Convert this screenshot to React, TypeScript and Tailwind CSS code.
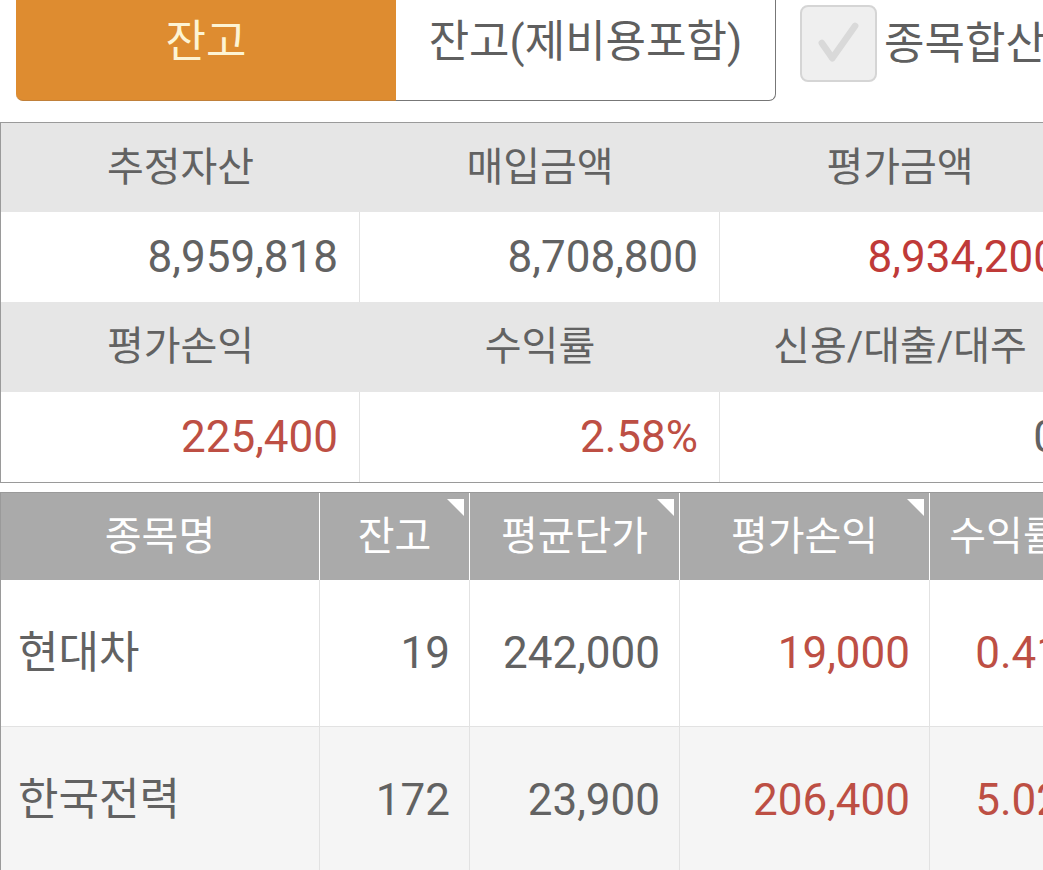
import { Fragment } from 'react';

// 잔고 화면 - 요약 + 종목 리스트
const FONT = { fontFamily: "Roboto, 'Noto Sans CJK KR', sans-serif" };

type Summary = { label: string; value: string; tone?: 'red' | 'dark' };

const summaryRows: Summary[][] = [
  [
    { label: '추정자산', value: '8,959,818' },
    { label: '매입금액', value: '8,708,800' },
    { label: '평가금액', value: '8,934,200', tone: 'dark' },
  ],
  [
    { label: '평가손익', value: '225,400', tone: 'red' },
    { label: '수익률', value: '2.58%', tone: 'red' },
    { label: '신용/대출/대주', value: '0' },
  ],
];

const columns = [
  { label: '종목명', width: 'w-[319px]', sort: false },
  { label: '잔고', width: 'w-[150px]', sort: true },
  { label: '평균단가', width: 'w-[210px]', sort: true },
  { label: '평가손익', width: 'w-[250px]', sort: true },
  { label: '수익률', width: 'w-[150px]', sort: false },
];

const stocks = [
  { name: '현대차', qty: '19', avg: '242,000', pl: '19,000', rate: '0.41', bg: 'bg-white' },
  { name: '한국전력', qty: '172', avg: '23,900', pl: '206,400', rate: '5.02', bg: 'bg-[#f5f5f5]' },
];

const toneClass = (tone?: string) => {
  if (tone === 'red') return 'text-[#bd4f44]';
  if (tone === 'dark') return 'text-[#bf3a38]';
  return 'text-[#626262]';
};

const Tabs = () => (
  <div className="flex items-start h-[101px]">
    <div className="ml-4 flex h-[101px]">
      <div className="w-[380px] flex items-center justify-center pb-[17px] bg-[#de8c30] border-b border-[#c0803a] rounded-bl-[7px] text-[44px] leading-none text-[#fdf4d4]">
        잔고
      </div>
      <div className="w-[380px] flex items-center justify-center pb-[17px] bg-white border-r border-b border-[#777] rounded-br-[7px] text-[44px] leading-none text-[#5f5f5f] whitespace-nowrap">
        잔고(제비용포함)
      </div>
    </div>
    <div className="ml-6 mt-[5px] flex items-center gap-[7px]">
      <div className="w-[77px] h-[77px] shrink-0 rounded-lg bg-[#efefef] border-2 border-[#d5d5d5] flex items-center justify-center">
        <svg width="77" height="77" viewBox="0 0 77 77">
          <path d="M21 38 L32 54 L56 20" fill="none" stroke="#d9d9d9" strokeWidth="7" strokeLinecap="round" strokeLinejoin="round" />
        </svg>
      </div>
      <span className="text-[44px] leading-none text-[#5f5f5f] whitespace-nowrap">종목합산</span>
    </div>
  </div>
);

const SummaryTable = () => (
  <div className="mt-[21px] w-[1080px] border-l border-t border-b border-[#9a9a9a] grid grid-cols-[359px_360px_360px]">
    {summaryRows.map((row, i) => (
      <Fragment key={i}>
        {row.map((c) => (
          <div
            key={c.label}
            className={`${i === 0 ? 'h-[89px]' : 'h-[90px]'} bg-[#e6e6e6] flex items-center justify-center text-[40px] leading-none text-[#626262] whitespace-nowrap`}
          >
            {c.label}
          </div>
        ))}
        {row.map((c) => (
          <div
            key={c.label + '-v'}
            className={`h-[90px] bg-white border-r border-[#e2e2e2] flex items-center justify-end pr-[21px] text-[44px] leading-none ${toneClass(c.tone)}`}
          >
            {c.value}
          </div>
        ))}
      </Fragment>
    ))}
  </div>
);

const SortMark = () => (
  <span className="absolute top-[6px] right-[5px] w-0 h-0 border-l-[17px] border-l-transparent border-t-[17px] border-t-white" />
);

const StockTable = () => (
  <div className="mt-[9px] w-[1080px] border-l border-t border-[#9a9a9a]">
    <div className="flex h-[87px] bg-[#aaaaaa]">
      {columns.map((col) => (
        <div
          key={col.label}
          className={`${col.width} relative shrink-0 border-r border-white flex items-center justify-center text-[40px] leading-none text-white whitespace-nowrap`}
        >
          {col.label}
          {col.sort && <SortMark />}
        </div>
      ))}
    </div>
    {stocks.map((s) => (
      <div key={s.name} className={`flex h-[147px] ${s.bg} border-b border-[#e2e2e2]`}>
        <div className="w-[319px] shrink-0 border-r border-[#e2e2e2] flex items-center pl-[17px] text-[44px] leading-none text-[#626262]">
          {s.name}
        </div>
        <div className="w-[150px] shrink-0 border-r border-[#e2e2e2] flex items-center justify-end pr-[19px] text-[44px] leading-none text-[#626262]">
          {s.qty}
        </div>
        <div className="w-[210px] shrink-0 border-r border-[#e2e2e2] flex items-center justify-end pr-[19px] text-[44px] leading-none text-[#626262]">
          {s.avg}
        </div>
        <div className="w-[250px] shrink-0 border-r border-[#e2e2e2] flex items-center justify-end pr-[19px] text-[44px] leading-none text-[#bd4f44]">
          {s.pl}
        </div>
        <div className="w-[150px] shrink-0 flex items-center justify-end pr-[19px] text-[44px] leading-none text-[#bd4f44]">
          {s.rate}
        </div>
      </div>
    ))}
  </div>
);

export default function App() {
  return (
    <div className="w-[1043px] h-[870px] overflow-hidden bg-white" style={FONT}>
      <Tabs />
      <SummaryTable />
      <StockTable />
    </div>
  );
}
